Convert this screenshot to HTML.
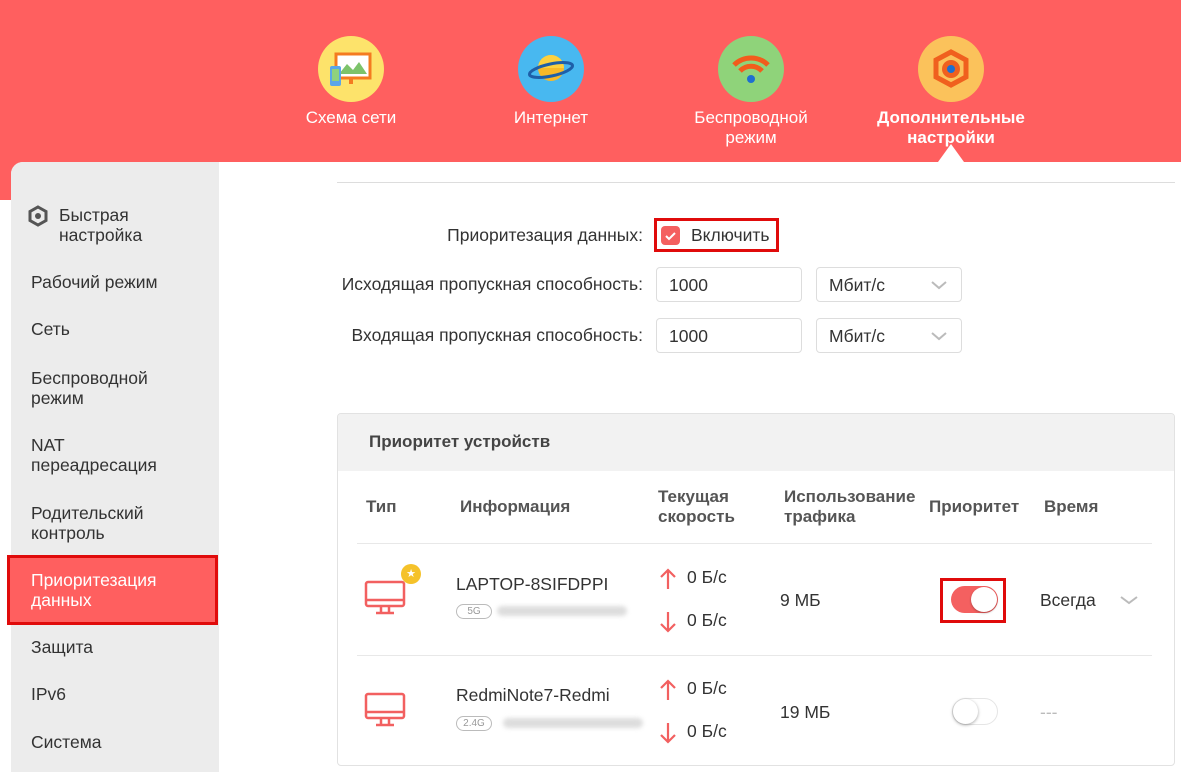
<!DOCTYPE html>
<html><head><meta charset="utf-8"><style>
*{margin:0;padding:0;box-sizing:border-box}
body{width:1181px;height:772px;overflow:hidden;background:#fff;font-family:"Liberation Sans",sans-serif;color:#333;position:relative}
.abs{position:absolute}
.hdr{left:0;top:0;width:1181px;height:200px;background:#ff5f5f}
.nav{top:36px;width:170px;text-align:center;color:#fff;font-size:17px;line-height:20px}
.nav .c{width:66px;height:66px;border-radius:50%;margin:0 auto 6px}
.panel{left:11px;top:162px;width:1170px;height:610px;background:#fff;border-top-left-radius:12px;overflow:hidden}
.side{left:0;top:0;width:208px;height:610px;background:#ececec}
.si{left:20px;font-size:17.5px;line-height:20px;color:#333}
.lbl{font-size:17.5px;color:#333;text-align:right;width:420px;left:223px}
.inp{height:35px;border:1px solid #ddd;border-radius:4px;font-size:17.5px;padding:7px 12px;color:#333}
.th{font-size:17px;font-weight:bold;color:#555;line-height:20px}
.td{font-size:17.5px;color:#333}
.ar{font-size:26px;line-height:24px;color:#f26060}
</style></head><body>
<div class="abs hdr"></div>
<div class="abs nav" style="left:266px"><div class="c" style="background:#fde36b;position:relative">
<svg width="66" height="66" viewBox="0 0 66 66"><rect x="18" y="18" width="34" height="24" fill="#fff" stroke="#f47b20" stroke-width="3"/><path d="M21 38l8-10 6 6 6-8 8 12z" fill="#7cc36a"/><rect x="31" y="42" width="4" height="6" fill="#f47b20"/><rect x="12" y="30" width="11" height="20" rx="2" fill="#5aa6e8"/><rect x="14" y="33" width="7" height="12" fill="#8fd17e"/></svg></div>Схема сети</div>
<div class="abs nav" style="left:466px"><div class="c" style="background:#48b8f0"><svg width="66" height="66" viewBox="0 0 66 66"><circle cx="33" cy="32" r="13" fill="#f7b928"/><path d="M33 19a13 13 0 0 1 13 13H20a13 13 0 0 1 13-13z" fill="#fcd13f"/><ellipse cx="33" cy="34" rx="22" ry="6" fill="none" stroke="#1e5fa8" stroke-width="3" transform="rotate(-12 33 34)"/></svg></div>Интернет</div>
<div class="abs nav" style="left:666px"><div class="c" style="background:#8fd37a"><svg width="66" height="66" viewBox="0 0 66 66"><path d="M16 29a24 24 0 0 1 34 0M22 35a15 15 0 0 1 22 0" fill="none" stroke="#f25c1c" stroke-width="5"/><circle cx="33" cy="43" r="4" fill="#1e6fd0"/></svg></div>Беспроводной<br>режим</div>
<div class="abs nav" style="left:866px;font-weight:bold"><div class="c" style="background:#fbc25b"><svg width="66" height="66" viewBox="0 0 66 66"><path d="M33 16l15 8v17l-15 8-15-8V24z" fill="#fbc25b" stroke="#f0601e" stroke-width="5"/><circle cx="33" cy="33" r="9" fill="#f0601e"/><circle cx="33" cy="33" r="4" fill="#1e6fd0"/></svg></div>Дополнительные<br>настройки</div>
<div class="abs" style="left:938px;top:144px;width:0;height:0;border-left:13px solid transparent;border-right:13px solid transparent;border-bottom:18px solid #fff"></div>

<div class="abs panel">
<div class="abs side"></div>
</div>
<svg class="abs" style="left:27px;top:205px" width="22" height="22" viewBox="0 0 22 22"><path d="M11 2l8 4.5v9L11 20l-8-4.5v-9z" fill="none" stroke="#555" stroke-width="3"/><circle cx="11" cy="11" r="3" fill="#555"/></svg>
<div class="abs si" style="left:59px;top:205px">Быстрая<br>настройка</div>
<div class="abs si" style="left:31px;top:272px">Рабочий режим</div>
<div class="abs si" style="left:31px;top:319px">Сеть</div>
<div class="abs si" style="left:31px;top:368px">Беспроводной<br>режим</div>
<div class="abs si" style="left:31px;top:435px">NAT<br>переадресация</div>
<div class="abs si" style="left:31px;top:503px">Родительский<br>контроль</div>
<div class="abs" style="left:7px;top:555px;width:211px;height:70px;background:#ff5f5f;border:3px solid #e00b0b"></div>
<div class="abs si" style="left:31px;top:570px;color:#fff">Приоритезация<br>данных</div>
<div class="abs si" style="left:31px;top:637px">Защита</div>
<div class="abs si" style="left:31px;top:684px">IPv6</div>
<div class="abs si" style="left:31px;top:732px">Система</div>

<div class="abs" style="left:337px;top:182px;width:838px;height:1px;background:#ddd"></div>
<div class="abs lbl" style="top:225px">Приоритезация данных:</div>
<div class="abs" style="left:654px;top:218px;width:125px;height:34px;border:3px solid #e00b0b"></div>
<div class="abs" style="left:661px;top:226px;width:19px;height:19px;border-radius:4px;background:#f46060"><svg width="19" height="19"><path d="M5 10l3 3 6-6" fill="none" stroke="#fff" stroke-width="2"/></svg></div>
<div class="abs td" style="left:691px;top:225px">Включить</div>
<div class="abs lbl" style="top:274px">Исходящая пропускная способность:</div>
<div class="abs inp" style="left:656px;top:267px;width:146px">1000</div>
<div class="abs inp" style="left:816px;top:267px;width:146px">Мбит/с</div>
<div class="abs lbl" style="top:325px">Входящая пропускная способность:</div>
<div class="abs inp" style="left:656px;top:318px;width:146px">1000</div>
<div class="abs inp" style="left:816px;top:318px;width:146px">Мбит/с</div>
<svg class="abs" style="left:930px;top:279px" width="18" height="12"><path d="M2 3l7 6 7-6" fill="none" stroke="#bbb" stroke-width="2"/></svg>
<svg class="abs" style="left:930px;top:330px" width="18" height="12"><path d="M2 3l7 6 7-6" fill="none" stroke="#bbb" stroke-width="2"/></svg>

<div class="abs" style="left:337px;top:413px;width:838px;height:353px;border:1px solid #e2e2e2;border-radius:4px;overflow:hidden">
<div style="height:57px;background:#f2f2f2"></div></div>
<div class="abs th" style="left:369px;top:432px;color:#444">Приоритет устройств</div>
<div class="abs th" style="left:366px;top:497px">Тип</div>
<div class="abs th" style="left:460px;top:497px">Информация</div>
<div class="abs th" style="left:658px;top:487px">Текущая<br>скорость</div>
<div class="abs th" style="left:784px;top:487px">Использование<br>трафика</div>
<div class="abs th" style="left:929px;top:497px">Приоритет</div>
<div class="abs th" style="left:1044px;top:497px">Время</div>
<div class="abs" style="left:357px;top:543px;width:795px;height:1px;background:#e8e8e8"></div>
<div class="abs" style="left:357px;top:655px;width:795px;height:1px;background:#e8e8e8"></div>

<svg class="abs" style="left:364px;top:580px" width="44" height="38"><rect x="2" y="2" width="38" height="24" rx="2" fill="none" stroke="#f26060" stroke-width="2.5"/><path d="M2 20h38M17 26v6M25 26v6M12 33h18" stroke="#f26060" stroke-width="2.5"/></svg>
<div class="abs" style="left:401px;top:564px;width:20px;height:20px;border-radius:50%;background:#f5c22a;color:#fff;font-size:11px;text-align:center;line-height:20px">★</div>
<svg class="abs" style="left:364px;top:692px" width="44" height="38"><rect x="2" y="2" width="38" height="24" rx="2" fill="none" stroke="#f26060" stroke-width="2.5"/><path d="M2 20h38M17 26v6M25 26v6M12 33h18" stroke="#f26060" stroke-width="2.5"/></svg>

<div class="abs td" style="left:456px;top:574px">LAPTOP-8SIFDPPI</div>
<div class="abs" style="left:456px;top:604px;width:36px;height:15px;border:1px solid #bbb;border-radius:8px;font-size:10px;color:#999;text-align:center;line-height:13px">5G</div>
<div class="abs" style="left:497px;top:606px;width:130px;height:10px;background:#ddd;border-radius:5px;filter:blur(2px)"></div>
<div class="abs td" style="left:456px;top:685px">RedmiNote7-Redmi</div>
<div class="abs" style="left:456px;top:716px;width:36px;height:15px;border:1px solid #bbb;border-radius:8px;font-size:10px;color:#999;text-align:center;line-height:13px">2.4G</div>
<div class="abs" style="left:503px;top:718px;width:140px;height:10px;background:#ddd;border-radius:5px;filter:blur(2px)"></div>

<svg class="abs" style="left:658px;top:567px" width="20" height="24"><path d="M10 22V3M3 10l7-7 7 7" fill="none" stroke="#f26060" stroke-width="2.2"/></svg><div class="abs td" style="left:687px;top:567px">0 Б/с</div>
<svg class="abs" style="left:658px;top:610px" width="20" height="24"><path d="M10 2v19M3 14l7 7 7-7" fill="none" stroke="#f26060" stroke-width="2.2"/></svg><div class="abs td" style="left:687px;top:610px">0 Б/с</div>
<svg class="abs" style="left:658px;top:678px" width="20" height="24"><path d="M10 22V3M3 10l7-7 7 7" fill="none" stroke="#f26060" stroke-width="2.2"/></svg><div class="abs td" style="left:687px;top:678px">0 Б/с</div>
<svg class="abs" style="left:658px;top:721px" width="20" height="24"><path d="M10 2v19M3 14l7 7 7-7" fill="none" stroke="#f26060" stroke-width="2.2"/></svg><div class="abs td" style="left:687px;top:721px">0 Б/с</div>
<div class="abs td" style="left:780px;top:590px">9 МБ</div>
<div class="abs td" style="left:780px;top:702px">19 МБ</div>

<div class="abs" style="left:940px;top:578px;width:66px;height:45px;border:3px solid #e00b0b"></div>
<div class="abs" style="left:951px;top:586px;width:47px;height:27px;border-radius:14px;background:#f46060"></div>
<div class="abs" style="left:971px;top:587px;width:26px;height:25px;border-radius:50%;background:#fff;box-shadow:0 1px 2px rgba(0,0,0,.3)"></div>
<div class="abs" style="left:952px;top:698px;width:46px;height:27px;border-radius:14px;background:#fff;border:1px solid #e5e5e5"></div>
<div class="abs" style="left:953px;top:699px;width:25px;height:25px;border-radius:50%;background:#fff;box-shadow:0 1px 3px rgba(0,0,0,.35)"></div>
<div class="abs td" style="left:1040px;top:590px">Всегда</div>
<svg class="abs" style="left:1119px;top:594px" width="20" height="12"><path d="M2 3l8 6 8-6" fill="none" stroke="#bbb" stroke-width="2"/></svg>
<div class="abs td" style="left:1040px;top:702px;color:#bbb">---</div>
</body></html>
